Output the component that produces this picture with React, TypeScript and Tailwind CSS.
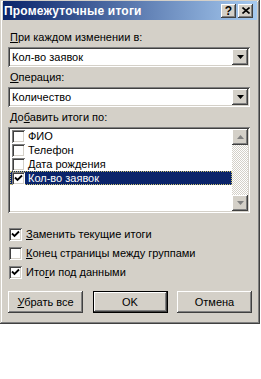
import React from "react";

const raised =
  "shadow-[inset_-1px_-1px_#404040,inset_1px_1px_#ffffff,inset_-2px_-2px_#808080,inset_2px_2px_#d4d0c8]";
const sunken =
  "shadow-[inset_1px_1px_#808080,inset_-1px_-1px_#ffffff,inset_2px_2px_#404040,inset_-2px_-2px_#d4d0c8]";

function Check({ checked }: { checked?: boolean }) {
  return (
    <span className={`relative inline-block w-[13px] h-[13px] shrink-0 bg-white ${sunken}`}>
      {checked && (
        <svg className="absolute left-[2px] top-[2px]" width="9" height="9" viewBox="0 0 9 9">
          <path d="M1 3.5 L3.5 6 L8 1.5" fill="none" stroke="#000" strokeWidth="1.8" />
        </svg>
      )}
    </span>
  );
}

function Arrow({ up, grey }: { up?: boolean; grey?: boolean }) {
  return (
    <svg width="7" height="4" viewBox="0 0 7 4">
      <path
        d={up ? "M3.5 0 L7 4 L0 4 Z" : "M0 0 L7 0 L3.5 4 Z"}
        fill={grey ? "#808080" : "#000"}
      />
    </svg>
  );
}

function Combo({ value }: { value: string }) {
  return (
    <div className={`flex h-[20px] w-[242px] bg-white p-[2px] ${sunken}`}>
      <div className="flex-1 pl-[2px] leading-[16px]">{value}</div>
      <div className={`w-[16px] h-[16px] flex items-center justify-center bg-[#d4d0c8] ${raised}`}>
        <Arrow />
      </div>
    </div>
  );
}

const FIELDS = [
  { label: "ФИО", checked: false },
  { label: "Телефон", checked: false },
  { label: "Дата рождения", checked: false },
  { label: "Кол-во заявок", checked: true, selected: true },
];

export default function App() {
  return (
    <div className="w-[261px] h-[379px] bg-white text-[11px] text-black font-['Liberation_Sans',Arial,sans-serif]">
      <div
        className={`w-[260px] h-[324px] bg-[#d4d0c8] pt-[1px] px-[3px] flex flex-col shadow-[inset_-1px_-1px_#404040,inset_1px_1px_#d4d0c8,inset_-2px_-2px_#808080,inset_2px_2px_#ffffff]`}
      >
        <div className="h-[19px] flex items-center pl-[1px] pr-[4px] bg-[linear-gradient(to_right,#0a246a,#a6caf0)]">
          <span className="flex-1 text-white font-bold text-[12px] tracking-[0.2px]">
            Промежуточные итоги
          </span>
          <div className="flex gap-[2px]">
            <button
              className={`w-[15px] h-[14px] bg-[#d4d0c8] flex items-center justify-center font-bold text-[12px] leading-none ${raised}`}
            >
              ?
            </button>
            <button
              className={`w-[15px] h-[14px] bg-[#d4d0c8] flex items-center justify-center ${raised}`}
            >
              <svg width="8" height="7" viewBox="0 0 8 7">
                <path d="M0.5 0.5 L7.5 6.5 M7.5 0.5 L0.5 6.5" stroke="#000" strokeWidth="1.6" />
              </svg>
            </button>
          </div>
        </div>

        <div className="flex flex-col pl-[5px]">
          <div className="mt-[11px] ml-[2px] h-[13px] leading-[13px]">
            <u>П</u>ри каждом изменении в:
          </div>
          <div className="mt-[3px]">
            <Combo value="Кол-во заявок" />
          </div>

          <div className="mt-[4px] ml-[2px] h-[13px] leading-[13px]">
            <u>О</u>перация:
          </div>
          <div className="mt-[3px]">
            <Combo value="Количество" />
          </div>

          <div className="mt-[4px] ml-[2px] h-[13px] leading-[13px]">
            До<u>б</u>авить итоги по:
          </div>
          <div className={`mt-[3px] w-[242px] h-[86px] bg-white p-[2px] flex ${sunken}`}>
            <div className="flex-1 flex flex-col">
              {FIELDS.map((f) => (
                <div
                  key={f.label}
                  className={`h-[14px] flex items-center gap-[3px] pl-[2px] ${
                    f.selected ? "bg-[#0a246a] text-white outline-1 outline-dotted outline-[#c8c070] -outline-offset-1" : ""
                  }`}
                >
                  <Check checked={f.checked} />
                  <span className="leading-[14px]">{f.label}</span>
                </div>
              ))}
            </div>
            <div className="w-[16px] flex flex-col bg-[repeating-conic-gradient(#d4d0c8_0_25%,#ffffff_0_50%)] bg-[length:2px_2px]">
              <div className={`h-[16px] flex items-center justify-center bg-[#d4d0c8] ${raised}`}>
                <Arrow up grey />
              </div>
              <div className="flex-1" />
              <div className={`h-[16px] flex items-center justify-center bg-[#d4d0c8] ${raised}`}>
                <Arrow grey />
              </div>
            </div>
          </div>

          <div className="mt-[12px] flex flex-col pl-[1px]">
            {[
              { pre: "", u: "З", post: "аменить текущие итоги", checked: true },
              { pre: "", u: "К", post: "онец страницы между группами", checked: false },
              { pre: "Ито", u: "г", post: "и под данными", checked: true },
            ].map((r) => (
              <label key={r.post} className="h-[19px] flex items-center gap-[4px]">
                <Check checked={r.checked} />
                <span>
                  {r.pre}
                  <u>{r.u}</u>
                  {r.post}
                </span>
              </label>
            ))}
          </div>

          <div className="mt-[9px] w-[244px] flex justify-between">
            <button className={`w-[75px] h-[22px] bg-[#d4d0c8] ${raised}`}>
              <u>У</u>брать все
            </button>
            <button
              className={`w-[75px] h-[22px] bg-[#d4d0c8] border border-black shadow-[inset_-1px_-1px_#404040,inset_1px_1px_#ffffff,inset_-2px_-2px_#808080]`}
            >
              OK
            </button>
            <button className={`w-[75px] h-[22px] bg-[#d4d0c8] ${raised}`}>Отмена</button>
          </div>
        </div>
      </div>
    </div>
  );
}
